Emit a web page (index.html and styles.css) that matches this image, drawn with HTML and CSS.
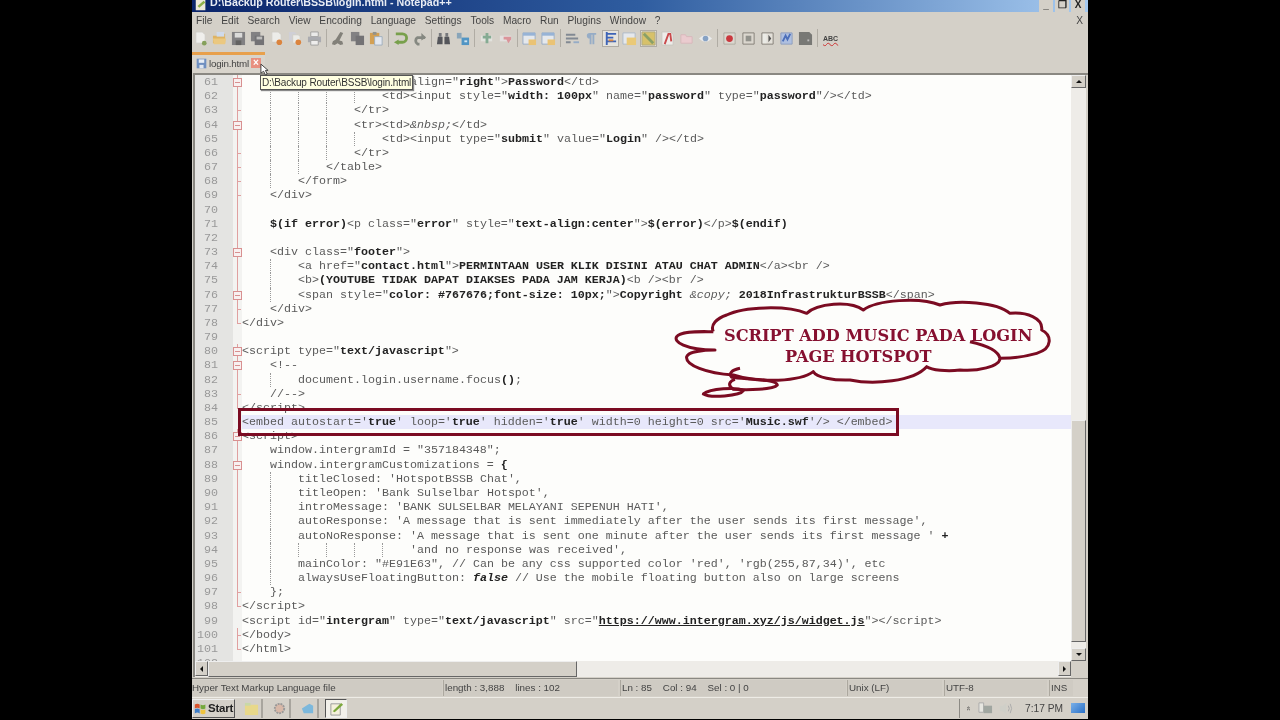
FILE: index.html
```html
<!DOCTYPE html>
<html lang="en">
<head>
    <meta charset="UTF-8">
    <title>login.html - Notepad++</title>
    <link rel="stylesheet" href="styles.css">
</head>
<body>
    <svg class="defs" width="0" height="0">
        <symbol id="i-new" viewBox="0 0 16 16"><path d="M3 1h7l3 3v9H3z" fill="#f4f4f2" stroke="#d0cec8"/><circle cx="12" cy="13" r="2.5" fill="#7c9a4c"/></symbol>
        <symbol id="i-open" viewBox="0 0 16 16"><path d="M1 5h5l1-2h7v10H1z" fill="#e0b056"/><path d="M5 1h8v5H5z" fill="#cfdcf0"/><path d="M1 8h14l-1 6H2z" fill="#efc877"/></symbol>
        <symbol id="i-save" viewBox="0 0 16 16"><path d="M1 1h14v14H1z" fill="#77777a"/><path d="M4 2h8v5H4z" fill="#ddd"/><path d="M5 10h6v5H5z" fill="#555"/></symbol>
        <symbol id="i-saveall" viewBox="0 0 16 16"><path d="M1 1h10v10H1z" fill="#77777a"/><path d="M5 5h10v10H5z" fill="#66666a"/><path d="M7 6h6v3H7z" fill="#bbb"/></symbol>
        <symbol id="i-close" viewBox="0 0 16 16"><path d="M3 1h7l3 3v8H3z" fill="#f0f0ee" stroke="#cfcdc6"/><circle cx="11" cy="12" r="3" fill="#dd7a2c"/></symbol>
        <symbol id="i-closeall" viewBox="0 0 16 16"><path d="M1 1h6l2 2v8H1z" fill="#cfcfd8"/><path d="M5 4h6l2 2v7H5z" fill="#efefec" stroke="#cfcdc6"/><circle cx="11" cy="12" r="3" fill="#dd7a2c"/></symbol>
        <symbol id="i-print" viewBox="0 0 16 16"><path d="M4 1h8v5H4z" fill="#eee" stroke="#999"/><path d="M1 6h14v6H1z" fill="#a5a7ad"/><path d="M4 10h8v5H4z" fill="#f2f2f2" stroke="#999"/></symbol>
        <symbol id="i-cut" viewBox="0 0 16 16"><path d="M10 1l3 1-4 8 3 1 1 3-3 1-3-2-3 2-3-1 1-3 3-2z" fill="#77756f"/></symbol>
        <symbol id="i-copy" viewBox="0 0 16 16"><path d="M1 1h9v10H1z" fill="#77777a"/><path d="M6 5h9v10H6z" fill="#66666a"/></symbol>
        <symbol id="i-paste" viewBox="0 0 16 16"><path d="M1 2h10v12H1z" fill="#d39a45"/><path d="M4 1h4v3H4z" fill="#8a8a84"/><path d="M6 6h8v9H6z" fill="#e6ecf6" stroke="#9ab"/></symbol>
        <symbol id="i-undo" viewBox="0 0 16 16"><path d="M3 3h7a4 4 0 0 1 0 9H5" fill="none" stroke="#6c9a3c" stroke-width="3"/><path d="M6 9v6L1 12z" fill="#6c9a3c"/></symbol>
        <symbol id="i-redo" viewBox="0 0 16 16"><path d="M14 7H6a4 4 0 0 0 0 7h2" fill="none" stroke="#7b7f78" stroke-width="3"/><path d="M10 2l5 5-5 3z" fill="#7b7f78"/></symbol>
        <symbol id="i-find" viewBox="0 0 16 16"><path d="M2 6h5v8H1zM9 6h5l1 8H9z" fill="#44464c"/><path d="M3 2h3v4H3zM10 2h3v4h-3z" fill="#6a6c72"/></symbol>
        <symbol id="i-replace" viewBox="0 0 16 16"><path d="M2 2h5v6H2z" fill="#7fa0b8"/><path d="M7 7h8v8H7z" fill="#3f8ec4"/><path d="M10 10h3v2h-3z" fill="#cfe6f6"/></symbol>
        <symbol id="i-zin" viewBox="0 0 16 16"><path d="M2 5h12v6H2z" fill="#e4e6e2"/><path d="M7 2h3v3h3v3h-3v5H7V8H4V5h3z" fill="#7ba68c"/></symbol>
        <symbol id="i-zout" viewBox="0 0 16 16"><path d="M2 5h12v6H2z" fill="#e6e2e2"/><path d="M6 6h8v3l-3 4-2-4H6z" fill="#dc8c94"/></symbol>
        <symbol id="i-syncv" viewBox="0 0 16 16"><path d="M1 2h13v12H1z" fill="#e8ecf2" stroke="#8fa6c4"/><path d="M1 2h13v3H1z" fill="#8fb0d8"/><path d="M7 9h8v6H7z" fill="#eec26a"/></symbol>
        <symbol id="i-wrap" viewBox="0 0 16 16"><path d="M1 4h10M1 8h13M1 12h5" stroke="#77808c" stroke-width="2" fill="none"/><path d="M9 12h6" stroke="#8ea8c6" stroke-width="2"/></symbol>
        <symbol id="i-para" viewBox="0 0 16 16"><path d="M6 2h7v2h-2v10H9V4H8v10H6V8a3 3 0 0 1 0-6z" fill="#8ea8c6"/></symbol>
        <symbol id="i-guide" viewBox="0 0 16 16"><path d="M4 1v14M4 3h10M4 7h7M4 11h10" stroke="#2a56b4" stroke-width="2" fill="none"/><path d="M6 9h5v2H6z" fill="#d77b30"/></symbol>
        <symbol id="i-map" viewBox="0 0 16 16"><path d="M1 2h13v12H1z" fill="#e8ecf2" stroke="#a9b6c8"/><path d="M5 7h10v8H5z" fill="#eec96c"/></symbol>
        <symbol id="i-doc" viewBox="0 0 16 16"><path d="M1 1h14v14H1z" fill="#d8c05e" stroke="#a9a27a"/><path d="M3 3l10 10" stroke="#7f9a5a" stroke-width="3"/></symbol>
        <symbol id="i-func" viewBox="0 0 16 16"><path d="M2 1h10l2 3v11H2z" fill="#f2f0ee" stroke="#c8c6c0"/><path d="M5 14L9 3h2l1 8" fill="none" stroke="#c8383c" stroke-width="2"/></symbol>
        <symbol id="i-folder" viewBox="0 0 16 16"><path d="M2 4h5l1 2h6v7H2z" fill="#eecbd0" stroke="#d8b4ba"/></symbol>
        <symbol id="i-eye" viewBox="0 0 16 16"><path d="M1 8q7-7 14 0q-7 7-14 0z" fill="#eef0f4"/><circle cx="8" cy="8" r="3" fill="#7d9cc4"/></symbol>
        <symbol id="i-rec" viewBox="0 0 16 16"><path d="M2 2h12v12H2z" fill="#dcd8d0" stroke="#a9a59c"/><circle cx="8" cy="8" r="3.6" fill="#c9242c"/></symbol>
        <symbol id="i-stop" viewBox="0 0 16 16"><path d="M2 2h12v12H2z" fill="#dcd8d0" stroke="#77736c"/><path d="M5 5h6v6H5z" fill="#8a8a84"/></symbol>
        <symbol id="i-play" viewBox="0 0 16 16"><path d="M2 2h12v12H2z" fill="#e6e3dc" stroke="#77736c"/><path d="M9 4l3 4-3 4z" fill="#444"/><path d="M3 3h4v10H3z" fill="#eeeeea"/></symbol>
        <symbol id="i-playm" viewBox="0 0 16 16"><path d="M2 2h12v12H2z" fill="#a9bde4" stroke="#8598bc"/><path d="M4 11l3-6 2 4 3-6" stroke="#3a62b8" stroke-width="2" fill="none"/></symbol>
        <symbol id="i-savem" viewBox="0 0 16 16"><path d="M1 1h11l3 3v11H1z" fill="#6c6c6a"/><path d="M10 9h2v2h-2z" fill="#bbb"/></symbol>
        <symbol id="i-win" viewBox="0 0 16 16"><path d="M1 3q3-2 6 0v5q-3-2-6 0z" fill="#d8532c"/><path d="M8 3q3 2 6 0v5q-3 2-6 0z" fill="#74a83c"/><path d="M1 9q3-2 6 0v5q-3-2-6 0z" fill="#3c7cc8"/><path d="M8 9q3 2 6 0v5q-3 2-6 0z" fill="#eec23c"/></symbol>
    </svg>

    <div class="window">
        <div class="titlebar">
            <svg class="title-icon" viewBox="0 0 16 16"><path d="M2 2h11v12H2z" fill="#eeeadc"/><path d="M4 9l7-6 2 2-7 6z" fill="#8fb04a"/></svg>
            <span class="title-text">D:\Backup Router\BSSB\login.html - Notepad++</span>
            <div class="win-btns">
                <span class="win-btn">_</span>
                <span class="win-btn">&#10064;</span>
                <span class="win-btn">X</span>
            </div>
        </div>

        <div class="menubar">
            <span>File</span><span>Edit</span><span>Search</span><span>View</span><span>Encoding</span><span>Language</span><span>Settings</span><span>Tools</span><span>Macro</span><span>Run</span><span>Plugins</span><span>Window</span><span>?</span>
            <span class="menu-x">X</span>
        </div>

        <div class="toolbar">
            <svg class="tb"><use href="#i-new"/></svg>
            <svg class="tb"><use href="#i-open"/></svg>
            <svg class="tb"><use href="#i-save"/></svg>
            <svg class="tb"><use href="#i-saveall"/></svg>
            <svg class="tb"><use href="#i-close"/></svg>
            <svg class="tb"><use href="#i-closeall"/></svg>
            <svg class="tb"><use href="#i-print"/></svg>
            <i class="sep"></i>
            <svg class="tb"><use href="#i-cut"/></svg>
            <svg class="tb"><use href="#i-copy"/></svg>
            <svg class="tb"><use href="#i-paste"/></svg>
            <i class="sep"></i>
            <svg class="tb"><use href="#i-undo"/></svg>
            <svg class="tb"><use href="#i-redo"/></svg>
            <i class="sep"></i>
            <svg class="tb"><use href="#i-find"/></svg>
            <svg class="tb"><use href="#i-replace"/></svg>
            <i class="sep"></i>
            <svg class="tb"><use href="#i-zin"/></svg>
            <svg class="tb"><use href="#i-zout"/></svg>
            <i class="sep"></i>
            <svg class="tb"><use href="#i-syncv"/></svg>
            <svg class="tb"><use href="#i-syncv"/></svg>
            <i class="sep"></i>
            <svg class="tb"><use href="#i-wrap"/></svg>
            <svg class="tb"><use href="#i-para"/></svg>
            <svg class="tb pressed"><use href="#i-guide"/></svg>
            <svg class="tb"><use href="#i-map"/></svg>
            <svg class="tb pressed"><use href="#i-doc"/></svg>
            <svg class="tb"><use href="#i-func"/></svg>
            <svg class="tb"><use href="#i-folder"/></svg>
            <svg class="tb"><use href="#i-eye"/></svg>
            <i class="sep"></i>
            <svg class="tb"><use href="#i-rec"/></svg>
            <svg class="tb"><use href="#i-stop"/></svg>
            <svg class="tb"><use href="#i-play"/></svg>
            <svg class="tb"><use href="#i-playm"/></svg>
            <svg class="tb"><use href="#i-savem"/></svg>
            <i class="sep"></i>
            <span class="abc">ABC</span>
        </div>

        <div class="tabbar">
            <div class="tab">
                <svg class="tab-icon" viewBox="0 0 16 16"><path d="M1 1h14v14H1z" fill="#6f8fc0"/><path d="M4 2h8v5H4z" fill="#e8eef6"/><path d="M5 10h6v5H5z" fill="#dfe6f0"/></svg>
                <span>login.html</span>
                <span class="tab-close">&#215;</span>
                <svg class="cursor" viewBox="0 0 10 14"><path d="M1 1v10l3-2 2 4 2-1-2-4h3z" fill="#fff" stroke="#333"/></svg>
            </div>
        </div>

        <div class="editor">
            <div class="editor-main">
                <div class="code-area">
                    <div class="code">
                        <div class="ln"><span class="no">61</span><span class="fold box"></span><span class="src"><u></u><u class="g"></u><u class="g"></u><u class="g"></u>&lt;tr&gt;&lt;td align="<b>right</b>"&gt;<b>Password</b>&lt;/td&gt;</span></div>
                        <div class="ln"><span class="no">62</span><span class="fold"></span><span class="src"><u></u><u class="g"></u><u class="g"></u><u class="g"></u><u class="g"></u>&lt;td&gt;&lt;input style="<b>width: 100px</b>" name="<b>password</b>" type="<b>password</b>"/&gt;&lt;/td&gt;</span></div>
                        <div class="ln"><span class="no">63</span><span class="fold end"></span><span class="src"><u></u><u class="g"></u><u class="g"></u><u class="g"></u>&lt;/tr&gt;</span></div>
                        <div class="ln"><span class="no">64</span><span class="fold box"></span><span class="src"><u></u><u class="g"></u><u class="g"></u><u class="g"></u>&lt;tr&gt;&lt;td&gt;<em>&amp;nbsp;</em>&lt;/td&gt;</span></div>
                        <div class="ln"><span class="no">65</span><span class="fold"></span><span class="src"><u></u><u class="g"></u><u class="g"></u><u class="g"></u><u class="g"></u>&lt;td&gt;&lt;input type="<b>submit</b>" value="<b>Login</b>" /&gt;&lt;/td&gt;</span></div>
                        <div class="ln"><span class="no">66</span><span class="fold end"></span><span class="src"><u></u><u class="g"></u><u class="g"></u><u class="g"></u>&lt;/tr&gt;</span></div>
                        <div class="ln"><span class="no">67</span><span class="fold end"></span><span class="src"><u></u><u class="g"></u><u class="g"></u>&lt;/table&gt;</span></div>
                        <div class="ln"><span class="no">68</span><span class="fold end"></span><span class="src"><u></u><u class="g"></u>&lt;/form&gt;</span></div>
                        <div class="ln"><span class="no">69</span><span class="fold end"></span><span class="src"><u></u>&lt;/div&gt;</span></div>
                        <div class="ln"><span class="no">70</span><span class="fold"></span><span class="src"></span></div>
                        <div class="ln"><span class="no">71</span><span class="fold"></span><span class="src"><u></u><b>$(if error)</b>&lt;p class="<b>error</b>" style="<b>text-align:center</b>"&gt;<b>$(error)</b>&lt;/p&gt;<b>$(endif)</b></span></div>
                        <div class="ln"><span class="no">72</span><span class="fold"></span><span class="src"></span></div>
                        <div class="ln"><span class="no">73</span><span class="fold box"></span><span class="src"><u></u>&lt;div class="<b>footer</b>"&gt;</span></div>
                        <div class="ln"><span class="no">74</span><span class="fold"></span><span class="src"><u></u><u class="g"></u>&lt;a href="<b>contact.html</b>"&gt;<b>PERMINTAAN USER KLIK DISINI ATAU CHAT ADMIN</b>&lt;/a&gt;&lt;br /&gt;</span></div>
                        <div class="ln"><span class="no">75</span><span class="fold"></span><span class="src"><u></u><u class="g"></u>&lt;b&gt;<b>(YOUTUBE TIDAK DAPAT DIAKSES PADA JAM KERJA)</b>&lt;b /&gt;&lt;br /&gt;</span></div>
                        <div class="ln"><span class="no">76</span><span class="fold box"></span><span class="src"><u></u><u class="g"></u>&lt;span style="<b>color: #767676;font-size: 10px;</b>"&gt;<b>Copyright</b> <em>&amp;copy;</em> <b>2018InfrastrukturBSSB</b>&lt;/span&gt;</span></div>
                        <div class="ln"><span class="no">77</span><span class="fold end"></span><span class="src"><u></u>&lt;/div&gt;</span></div>
                        <div class="ln"><span class="no">78</span><span class="fold last"></span><span class="src">&lt;/div&gt;</span></div>
                        <div class="ln"><span class="no">79</span><span class="fold none"></span><span class="src"></span></div>
                        <div class="ln"><span class="no">80</span><span class="fold box"></span><span class="src">&lt;script type="<b>text/javascript</b>"&gt;</span></div>
                        <div class="ln"><span class="no">81</span><span class="fold box"></span><span class="src"><u></u>&lt;!--</span></div>
                        <div class="ln"><span class="no">82</span><span class="fold"></span><span class="src"><u></u><u class="g"></u>document.login.username.focus<b>()</b>;</span></div>
                        <div class="ln"><span class="no">83</span><span class="fold end"></span><span class="src"><u></u>//--&gt;</span></div>
                        <div class="ln"><span class="no">84</span><span class="fold last"></span><span class="src">&lt;/script&gt;</span></div>
                        <div class="ln hl"><span class="no">85</span><span class="fold none"></span><span class="src">&lt;embed autostart='<b>true</b>' loop='<b>true</b>' hidden='<b>true</b>' width=0 height=0 src='<b>Music.swf</b>'/&gt; &lt;/embed&gt;</span></div>
                        <div class="ln"><span class="no">86</span><span class="fold box"></span><span class="src">&lt;script&gt;</span></div>
                        <div class="ln"><span class="no">87</span><span class="fold"></span><span class="src"><u></u>window.intergramId = "357184348";</span></div>
                        <div class="ln"><span class="no">88</span><span class="fold box"></span><span class="src"><u></u>window.intergramCustomizations = <b>{</b></span></div>
                        <div class="ln"><span class="no">89</span><span class="fold"></span><span class="src"><u></u><u class="g"></u>titleClosed: 'HotspotBSSB Chat',</span></div>
                        <div class="ln"><span class="no">90</span><span class="fold"></span><span class="src"><u></u><u class="g"></u>titleOpen: 'Bank Sulselbar Hotspot',</span></div>
                        <div class="ln"><span class="no">91</span><span class="fold"></span><span class="src"><u></u><u class="g"></u>introMessage: 'BANK SULSELBAR MELAYANI SEPENUH HATI',</span></div>
                        <div class="ln"><span class="no">92</span><span class="fold"></span><span class="src"><u></u><u class="g"></u>autoResponse: 'A message that is sent immediately after the user sends its first message',</span></div>
                        <div class="ln"><span class="no">93</span><span class="fold"></span><span class="src"><u></u><u class="g"></u>autoNoResponse: 'A message that is sent one minute after the user sends its first message ' <b>+</b></span></div>
                        <div class="ln"><span class="no">94</span><span class="fold"></span><span class="src"><u></u><u class="g"></u><u class="g"></u><u class="g"></u><u class="g"></u><u class="g"></u>'and no response was received',</span></div>
                        <div class="ln"><span class="no">95</span><span class="fold"></span><span class="src"><u></u><u class="g"></u>mainColor: "#E91E63", // Can be any css supported color 'red', 'rgb(255,87,34)', etc</span></div>
                        <div class="ln"><span class="no">96</span><span class="fold"></span><span class="src"><u></u><u class="g"></u>alwaysUseFloatingButton: <b><em>false</em></b> // Use the mobile floating button also on large screens</span></div>
                        <div class="ln"><span class="no">97</span><span class="fold end"></span><span class="src"><u></u>};</span></div>
                        <div class="ln"><span class="no">98</span><span class="fold last"></span><span class="src">&lt;/script&gt;</span></div>
                        <div class="ln"><span class="no">99</span><span class="fold none"></span><span class="src">&lt;script id="<b>intergram</b>" type="<b>text/javascript</b>" src="<b class="link">https://www.intergram.xyz/js/widget.js</b>"&gt;&lt;/script&gt;</span></div>
                        <div class="ln"><span class="no">100</span><span class="fold end"></span><span class="src">&lt;/body&gt;</span></div>
                        <div class="ln"><span class="no">101</span><span class="fold last"></span><span class="src">&lt;/html&gt;</span></div>
                        <div class="ln"><span class="no">102</span><span class="fold none"></span><span class="src"></span></div>
                    </div>
                    <div class="tooltip">D:\Backup Router\BSSB\login.html</div>
                    <div class="red-box"></div>
                    <svg class="cloud" viewBox="0 0 1200 360">
                        <path class="cloud-line" d="M160 125C150 105 170 85 200 75C250 50 380 45 440 70C470 40 570 30 610 60C650 30 780 20 840 45C890 30 1010 35 1050 70C1100 65 1150 85 1145 120C1175 135 1180 175 1130 190C1095 200 1055 205 1020 205C1015 180 975 165 930 155M1020 205C1020 230 950 245 900 240C860 245 815 240 800 230C760 275 640 285 570 270C520 272 470 262 460 245C420 275 300 280 220 255C140 250 75 225 80 200C85 185 130 180 165 180C75 180 40 155 50 140C60 122 120 125 160 125"/>
                        <path class="cloud-line" d="M240 235C215 240 205 250 215 262C250 268 350 265 352 285C340 300 260 300 220 298C200 285 210 272 225 268"/>
                        <path class="cloud-line" d="M130 312C150 296 230 290 250 302C240 318 150 325 130 312Z"/>
                        <text class="cloud-text" x="192" y="154">SCRIPT ADD MUSIC PADA LOGIN</text>
                        <text class="cloud-text" x="375" y="216">PAGE HOTSPOT</text>
                    </svg>
                </div>
                <div class="hscroll">
                    <span class="sb-btn"><i class="arr arr-l"></i></span>
                    <span class="sb-thumb"></span>
                    <span class="sb-rest"></span>
                    <span class="sb-btn"><i class="arr arr-r"></i></span>
                </div>
            </div>
            <div class="vscroll">
                <span class="sb-btn"><i class="arr arr-u"></i></span>
                <span class="vs-rest"></span>
                <span class="vs-thumb"></span>
                <span class="sb-btn"><i class="arr arr-d"></i></span>
                <span class="corner"></span>
            </div>
        </div>

        <div class="statusbar">
            <span class="st st-type">Hyper Text Markup Language file</span>
            <span class="st st-len">length : 3,888 &nbsp;&nbsp; lines : 102</span>
            <span class="st st-pos">Ln : 85 &nbsp;&nbsp; Col : 94 &nbsp;&nbsp; Sel : 0 | 0</span>
            <span class="st st-eol">Unix (LF)</span>
            <span class="st st-enc">UTF-8</span>
            <span class="st st-ins">INS</span>
        </div>

        <div class="taskbar">
            <div class="start"><svg class="start-logo"><use href="#i-win"/></svg>Start</div>
            <div class="task-btn"><svg class="task-icon" viewBox="0 0 16 16"><path d="M1 4h14v11H1z" fill="#e8d88a"/><path d="M1 2h6v3H1z" fill="#c8d8a8"/></svg></div>
            <div class="task-btn"><svg class="task-icon" viewBox="0 0 16 16"><circle cx="8" cy="8" r="5" fill="#d8b8a8" stroke="#999" stroke-width="2" stroke-dasharray="2 1"/></svg></div>
            <div class="task-btn"><svg class="task-icon" viewBox="0 0 16 16"><path d="M2 8l8-5 4 2v8H4z" fill="#7cb8dc"/></svg></div>
            <div class="task-btn active"><svg class="task-icon" viewBox="0 0 16 16"><path d="M2 3h10v12H2z" fill="#f4f0dc" stroke="#999"/><path d="M4 11l9-9 2 2-9 8z" fill="#7ca83c"/></svg></div>
            <div class="tray">
                <span class="tray-up">&#171;</span>
                <svg class="tray-icon" viewBox="0 0 16 16"><path d="M1 2h5v10H1z" fill="#e6e6e0" stroke="#aaa"/><path d="M6 5h9v8H6z" fill="#a0a6a0"/></svg>
                <svg class="tray-icon" viewBox="0 0 16 16"><path d="M2 5h3l4-3v12l-4-3H2z" fill="#cfcfc8"/><path d="M11 5q2 3 0 6M13 3q3 5 0 10" fill="none" stroke="#aaa"/></svg>
                <span class="clock">7:17 PM</span>
                <span class="desk"></span>
            </div>
        </div>
    </div>
</body>
</html>
```

FILE: styles.css
```css
html,body{
    margin: 0;
    height: 100%;
}
body{
    background: #000;
    overflow: hidden;
    font-family: "Liberation Sans", Arial, sans-serif;
}
.defs{
    position: absolute;
}
.window{
    display: flex;
    flex-direction: column;
    width: 896px;
    height: 719px;
    margin-left: 192px;
    background: #d4d0c8;
    color: #333;
    filter: blur(.45px);
}

/* title bar, cut off at the top of the frame */
.titlebar{
    display: flex;
    align-items: flex-end;
    flex: none;
    height: 12px;
    overflow: hidden;
    background: linear-gradient(90deg, #0a246a, #2f5da0 50%, #a6caf0);
}
.title-icon{
    width: 14px;
    height: 14px;
    margin: 0 2px 0 2px;
    flex: none;
}
.title-text{
    font-size: 10.7px;
    font-weight: bold;
    line-height: 12px;
    color: #e8ecf4;
    position: relative;
    top: -4px;
}
.win-btns{
    display: flex;
    gap: 2px;
    margin: 0 3px 0 auto;
}
.win-btn{
    width: 14px;
    height: 12px;
    background: #d4d0c8;
    font-size: 10px;
    font-weight: bold;
    line-height: 9px;
    text-align: center;
    color: #222;
}

.menubar{
    display: flex;
    flex: none;
    align-items: center;
    gap: 8.8px;
    height: 16px;
    padding: 0 3px 0 4px;
    font-size: 10.2px;
    color: #444;
}
.menu-x{
    margin-left: auto;
    margin-right: 2px;
}

.toolbar{
    display: flex;
    flex: none;
    align-items: center;
    height: 20px;
    padding-left: 1px;
}
.tb{
    width: 15px;
    height: 15px;
    flex: none;
    margin-right: 4px;
    opacity: .88;
}
.tb.pressed{
    background: #e8e6e0;
    outline: 1px solid #aaa7a0;
}
.sep{
    width: 1px;
    height: 18px;
    margin: 0 4px 0 0;
    background: #b0aca4;
    flex: none;
}
.abc{
    font-size: 7px;
    font-weight: bold;
    color: #444;
    text-decoration: underline wavy #c33;
    margin-left: 1px;
}

.tabbar{
    flex: none;
    height: 25px;
    padding-top: 4px;
    box-sizing: border-box;
}
.tab{
    position: relative;
    display: flex;
    align-items: center;
    gap: 2px;
    width: 73px;
    height: 21px;
    padding: 0 0 2px 4px;
    box-sizing: border-box;
    border-top: 3px solid #e8a04c;
    background: #d8d4cc;
    font-size: 9.8px;
    letter-spacing: -.2px;
    color: #444;
}
.tab-icon{
    width: 11px;
    height: 11px;
    flex: none;
}
.tab-close{
    width: 10px;
    height: 10px;
    background: #e89080;
    color: #fff;
    font-size: 10px;
    font-weight: bold;
    line-height: 10px;
    text-align: center;
}
.cursor{
    position: absolute;
    left: 68px;
    top: 8px;
    width: 9px;
    height: 13px;
    z-index: 2;
}

.editor{
    display: flex;
    flex: none;
    height: 602px;
    margin-left: 1px;
    border: 2px solid #8a8882;
    border-bottom: 0;
    border-right: 0;
}
.editor-main{
    display: flex;
    flex-direction: column;
    flex: 1;
    min-width: 0;
}
.code-area{
    position: relative;
    flex: 1;
    min-height: 0;
    overflow: hidden;
    background: #fdfdfb;
}
.ln{
    display: flex;
    height: 14.175px;
    line-height: 14.175px;
    font-family: "Liberation Mono", "Courier New", monospace;
    font-size: 11.67px;
    color: #5a5a5a;
    white-space: pre;
}
.ln b{
    color: #222;
}
.ln em{
    font-style: italic;
}
.ln b.link{
    text-decoration: underline;
}
.ln.hl .src{
    background: #e8e8fb;
}
.no{
    flex: none;
    width: 23px;
    padding-right: 15px;
    text-align: right;
    background: #e4e4e2;
    color: #999;
}
.fold{
    flex: none;
    position: relative;
    width: 9px;
    background: #f3f3f1;
}
.fold::before{
    content: "";
    position: absolute;
    left: 4px;
    top: 0;
    bottom: 0;
    width: 1px;
    background: #e0a0a0;
}
.fold.box::after{
    content: "";
    position: absolute;
    left: 0;
    top: 3px;
    width: 7px;
    height: 7px;
    border: 1px solid #d89090;
    background: linear-gradient(#d89090,#d89090) center/5px 1px no-repeat #f8f0f0;
}
.fold.end::after,
.fold.last::after{
    content: "";
    position: absolute;
    left: 4px;
    top: 7px;
    width: 4px;
    height: 1px;
    background: #e0a0a0;
}
.fold.last::before{
    bottom: 7px;
}
.fold.none::before{
    display: none;
}
.src{
    flex: 1;
    display: block;
}
.src u{
    display: inline-block;
    box-sizing: border-box;
    width: 28.02px;
    height: 14.175px;
    vertical-align: top;
    text-decoration: none;
}
.src u.g{
    border-left: 1px dotted #999;
}

/* things that lie over the code */
.tooltip{
    position: absolute;
    left: 65px;
    top: 0;
    padding: 0 1px;
    height: 13px;
    line-height: 13px;
    border: 1px solid #555;
    background: #ffffe1;
    font-size: 10px;
    letter-spacing: -.15px;
    color: #333;
    white-space: nowrap;
    box-shadow: 1px 1px 1px #888;
}
.red-box{
    position: absolute;
    left: 43px;
    top: 333px;
    width: 655px;
    height: 22px;
    border: 3.5px solid #7b0b22;
}
.cloud{
    position: absolute;
    left: 465px;
    top: 215px;
    width: 400px;
    height: 120px;
}
.cloud-line{
    fill: none;
    stroke: #7b0b22;
    stroke-width: 9;
    stroke-linejoin: round;
}
.cloud-text{
    font-family: "DejaVu Serif", "Liberation Serif", serif;
    font-size: 48.5px;
    font-weight: bold;
    fill: #861030;
}

.hscroll{
    display: flex;
    flex: none;
    height: 16px;
    background: #eeece8;
}
.sb-btn{
    display: flex;
    align-items: center;
    justify-content: center;
    flex: none;
    box-sizing: border-box;
    border: 1px solid;
    border-color: #eee #666 #666 #eee;
    background: #d4d0c8;
}
.hscroll .sb-btn{
    width: 13px;
    height: 15px;
}
.vscroll .sb-btn{
    height: 13px;
}
.arr{
    width: 0;
    height: 0;
    border: 3px solid transparent;
}
.arr-l{
    border-right-color: #111;
    border-left-width: 0;
}
.arr-r{
    border-left-color: #111;
    border-right-width: 0;
}
.arr-u{
    border-bottom-color: #111;
    border-top-width: 0;
}
.arr-d{
    border-top-color: #111;
    border-bottom-width: 0;
}
.sb-thumb{
    width: 369px;
    flex: none;
    box-sizing: border-box;
    border: 1px solid;
    border-color: #eee #666 #666 #eee;
    background: #d4d0c8;
}
.sb-rest{
    flex: 1;
}
.vscroll{
    display: flex;
    flex-direction: column;
    flex: none;
    width: 15px;
    margin-right: 2px;
    background: #eeece8;
}
.vs-rest{
    height: 332px;
    flex: none;
}
.vs-thumb{
    flex: 1;
    margin-bottom: 6px;
    box-sizing: border-box;
    border: 1px solid;
    border-color: #eee #666 #666 #eee;
    background: #d4d0c8;
}
.corner{
    height: 16px;
    flex: none;
    background: #d4d0c8;
}

.statusbar{
    display: flex;
    flex: none;
    height: 16px;
    margin-top: 1px;
    padding-top: 1px;
    border-top: 1px solid #8a8882;
    font-size: 9.8px;
    line-height: 16px;
    color: #444;
}
.st{
    box-sizing: border-box;
    flex: none;
    padding-left: 1px;
    border-left: 1px solid #aca89f;
    background: #cfcbc3;
    white-space: nowrap;
    overflow: hidden;
}
.st-type{
    width: 250px;
    margin-right: 1px;
    border-left: 0;
    padding-left: 0;
}
.st-len{
    width: 175px;
    margin-right: 2px;
}
.st-pos{
    width: 226px;
    margin-right: 1px;
}
.st-eol{
    width: 95px;
    margin-right: 2px;
}
.st-enc{
    width: 103px;
    margin-right: 2px;
}
.st-ins{
    width: 24px;
}

.taskbar{
    display: flex;
    align-items: center;
    flex: none;
    gap: 6px;
    height: 21px;
    margin-top: 1px;
    border-top: 1px solid #eeece6;
    box-sizing: border-box;
}
.start{
    display: flex;
    align-items: center;
    gap: 1px;
    width: 43px;
    height: 19px;
    box-sizing: border-box;
    padding-left: 1px;
    border: 1px solid;
    border-color: #eee #555 #555 #eee;
    font-size: 11.5px;
    font-weight: bold;
    letter-spacing: -.2px;
    color: #222;
}
.start-logo{
    width: 13px;
    height: 13px;
    flex: none;
}
.task-btn{
    display: flex;
    align-items: center;
    justify-content: center;
    width: 22px;
    height: 19px;
    box-sizing: border-box;
    border-right: 2px solid #a8a59e;
}
.task-btn.active{
    background: #f2f0ea;
    border: 1px solid;
    border-color: #555 #eee #eee #555;
}
.task-icon{
    width: 15px;
    height: 15px;
}
.tray{
    display: flex;
    align-items: center;
    gap: 5px;
    height: 19px;
    margin-left: auto;
    margin-right: 1px;
    padding: 0 2px 0 6px;
    border-left: 1px solid #8c8a84;
    font-size: 10.2px;
    color: #444;
}
.tray-up{
    font-size: 8px;
    transform: rotate(90deg);
    margin-right: 3px;
}
.tray-icon{
    width: 15px;
    height: 15px;
}
.clock{
    margin-left: 7px;
    margin-right: 3px;
}
.desk{
    width: 14px;
    height: 10px;
    background: linear-gradient(135deg, #7ab0e8, #2a70c8);
}
```
